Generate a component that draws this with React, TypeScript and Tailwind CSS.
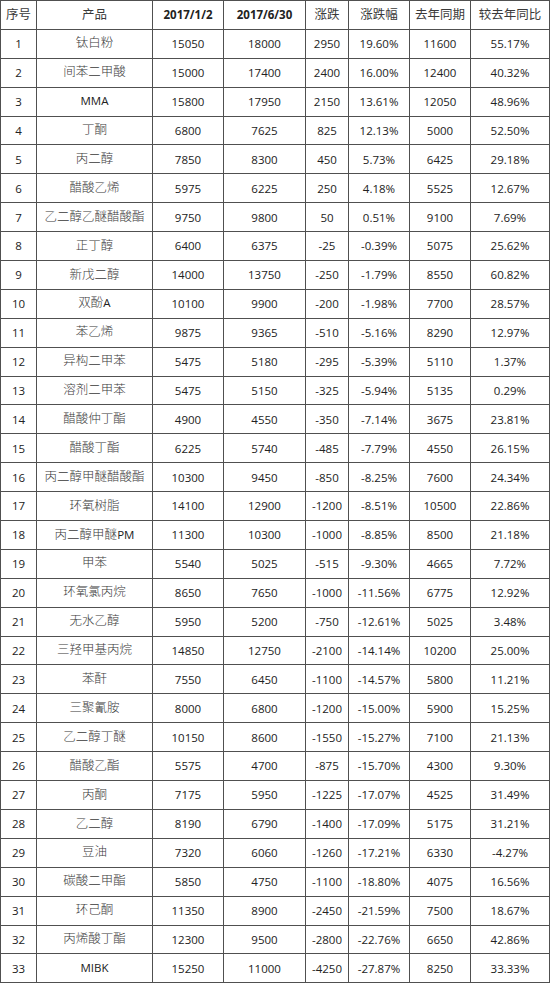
const rows: [string, string, string, string, string, string, string][] = [
  ['钛白粉', '15050', '18000', '2950', '19.60%', '11600', '55.17%'],
  ['间苯二甲酸', '15000', '17400', '2400', '16.00%', '12400', '40.32%'],
  ['MMA', '15800', '17950', '2150', '13.61%', '12050', '48.96%'],
  ['丁酮', '6800', '7625', '825', '12.13%', '5000', '52.50%'],
  ['丙二醇', '7850', '8300', '450', '5.73%', '6425', '29.18%'],
  ['醋酸乙烯', '5975', '6225', '250', '4.18%', '5525', '12.67%'],
  ['乙二醇乙醚醋酸酯', '9750', '9800', '50', '0.51%', '9100', '7.69%'],
  ['正丁醇', '6400', '6375', '-25', '-0.39%', '5075', '25.62%'],
  ['新戊二醇', '14000', '13750', '-250', '-1.79%', '8550', '60.82%'],
  ['双酚A', '10100', '9900', '-200', '-1.98%', '7700', '28.57%'],
  ['苯乙烯', '9875', '9365', '-510', '-5.16%', '8290', '12.97%'],
  ['异构二甲苯', '5475', '5180', '-295', '-5.39%', '5110', '1.37%'],
  ['溶剂二甲苯', '5475', '5150', '-325', '-5.94%', '5135', '0.29%'],
  ['醋酸仲丁酯', '4900', '4550', '-350', '-7.14%', '3675', '23.81%'],
  ['醋酸丁酯', '6225', '5740', '-485', '-7.79%', '4550', '26.15%'],
  ['丙二醇甲醚醋酸酯', '10300', '9450', '-850', '-8.25%', '7600', '24.34%'],
  ['环氧树脂', '14100', '12900', '-1200', '-8.51%', '10500', '22.86%'],
  ['丙二醇甲醚PM', '11300', '10300', '-1000', '-8.85%', '8500', '21.18%'],
  ['甲苯', '5540', '5025', '-515', '-9.30%', '4665', '7.72%'],
  ['环氧氯丙烷', '8650', '7650', '-1000', '-11.56%', '6775', '12.92%'],
  ['无水乙醇', '5950', '5200', '-750', '-12.61%', '5025', '3.48%'],
  ['三羟甲基丙烷', '14850', '12750', '-2100', '-14.14%', '10200', '25.00%'],
  ['苯酐', '7550', '6450', '-1100', '-14.57%', '5800', '11.21%'],
  ['三聚氰胺', '8000', '6800', '-1200', '-15.00%', '5900', '15.25%'],
  ['乙二醇丁醚', '10150', '8600', '-1550', '-15.27%', '7100', '21.13%'],
  ['醋酸乙酯', '5575', '4700', '-875', '-15.70%', '4300', '9.30%'],
  ['丙酮', '7175', '5950', '-1225', '-17.07%', '4525', '31.49%'],
  ['乙二醇', '8190', '6790', '-1400', '-17.09%', '5175', '31.21%'],
  ['豆油', '7320', '6060', '-1260', '-17.21%', '6330', '-4.27%'],
  ['碳酸二甲酯', '5850', '4750', '-1100', '-18.80%', '4075', '16.56%'],
  ['环己酮', '11350', '8900', '-2450', '-21.59%', '7500', '18.67%'],
  ['丙烯酸丁酯', '12300', '9500', '-2800', '-22.76%', '6650', '42.86%'],
  ['MIBK', '15250', '11000', '-4250', '-27.87%', '8250', '33.33%'],
];

const cell = 'border border-[#505050] h-[28.9px] p-0 text-center align-middle';
const cn = "font-['Open_Sans','Noto_Sans_CJK_SC',sans-serif] font-light text-[12.5px] text-[#3a3a3a]";
const num = "font-['Open_Sans','Noto_Sans_CJK_SC',sans-serif] text-[11.5px] text-[#222]";

// product names mix thin CJK glyphs with regular-weight Latin (双酚A, 丙二醇甲醚PM)
const Name = ({ text }: { text: string }) => {
  const parts = text.match(/[A-Za-z]+|[^A-Za-z]+/g) || [];
  return (
    <>
      {parts.map((p, k) =>
        /^[A-Za-z]+$/.test(p) ? (
          <span key={k} className="font-normal text-[11.5px] text-[#222]">{p}</span>
        ) : (
          <span key={k}>{p}</span>
        )
      )}
    </>
  );
};

const App = () => {
  return (
    <div className="w-[550px] h-[983px] bg-white">
      <table className="w-[549px] table-fixed border-collapse">
        <colgroup>
          <col className="w-[36px]" />
          <col className="w-[116px]" />
          <col className="w-[71px]" />
          <col className="w-[82px]" />
          <col className="w-[43px]" />
          <col className="w-[61px]" />
          <col className="w-[61px]" />
          <col className="w-[79px]" />
        </colgroup>
        <thead>
          <tr>
            <th className={`${cell} ${cn} font-normal`}>序号</th>
            <th className={`${cell} ${cn} font-normal`}>产品</th>
            <th className={`${cell} ${num} font-bold`}>2017/1/2</th>
            <th className={`${cell} ${num} font-bold`}>2017/6/30</th>
            <th className={`${cell} ${cn} font-normal`}>涨跌</th>
            <th className={`${cell} ${cn} font-normal`}>涨跌幅</th>
            <th className={`${cell} ${cn} font-normal`}>去年同期</th>
            <th className={`${cell} ${cn} font-normal`}>较去年同比</th>
          </tr>
        </thead>
        <tbody>
          {rows.map((r, i) => (
            <tr key={i}>
              <td className={`${cell} ${num}`}>{i + 1}</td>
              <td className={`${cell} ${cn}`}>
                <Name text={r[0]} />
              </td>
              {r.slice(1).map((v, j) => (
                <td key={j} className={`${cell} ${num}`}>{v}</td>
              ))}
            </tr>
          ))}
        </tbody>
      </table>
    </div>
  );
};

export default App;
